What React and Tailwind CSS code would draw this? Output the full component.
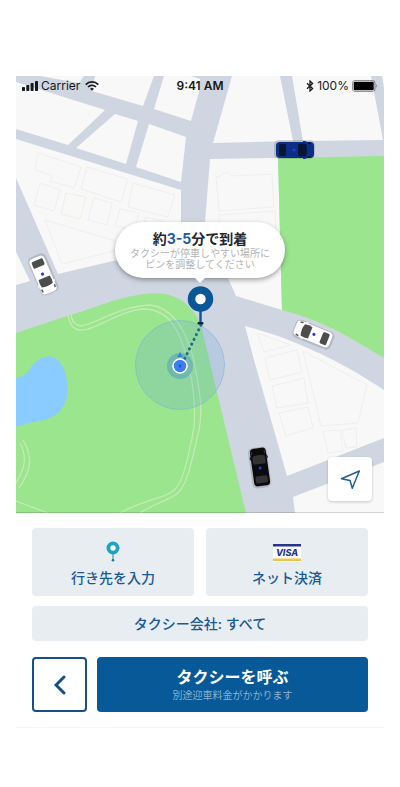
const parks = [
  'M16 333 L67 316 C95 308 115 298 138 295 C160 291 178 294 190 308 C198 316 201 324 203 334 L246 513 H16 Z',
  'M278 158 L384 156 V358 C355 341 330 323 282 310 Z',
]

const blocks = [
  '40,76 84,76 79,83',
  '95,76 154,76 143,106 92,91',
  '164,76 191,76 200,79 200,88 191,121 154,109',
  '16,82 105,110 68,145 16,129',
  '115,114 138,121 126,164 76,148',
  '149,124 186,137 181,182 136,167',
  '16,139 181,190 181,243 117,260 58,274 16,178',
  '16,252 30,281 16,285',
  '232,76 280,76 293,141 213,143',
  '292,76 371,76 383,140 303,141',
  '382,76 384,76 384,88',
  '210,159 278,158 282,310 236,296 228,278 204,235',
  '293,497 384,462 384,513 295,513',
]

const buildings = [
  '38,153 81,167 74,188 50,181 52,175 35,170',
  '87,167 128,179 121,202 81,189',
  '133,183 175,195 168,217 128,207',
  '40,183 60,190 54,211 34,205',
  '94,198 112,203 107,225 88,220',
  '120,209 139,213 134,230 115,226',
  '146,217 165,222 160,237 141,233',
  '45,220 122,243 118,250 62,264',
  '216,177 221,176 223,173 229,173 231,176 272,174 274,207 219,211',
  '219,215 275,211 277,252 222,256',
  '257,333 291,345 264,352',
  '265,358 297,350 302,372 270,380',
  '272,386 304,378 308,403 277,408',
  '279,413 308,407 313,428 286,436',
  '303,351 367,385 358,423 321,426',
  '323,431 340,430 343,451 328,453',
  '342,430 356,428 357,447 346,448',
]

const walks = [
  'M68 314 C70 330 78 332 88 329 C100 326 125 309 145 309 C172 310 180 335 187 357 C192 380 196 400 194 427 C190 450 184 480 176 488 C168 498 150 497 120 513',
  'M71 314 C72 325 80 328 88 324 C105 318 125 306 150 305 C175 308 187 335 193 357 C200 390 203 410 199 430 C192 460 188 480 180 491 C170 501 160 500 140 513',
  'M20 443 C26 455 27 465 16 483',
  'M23 440 C32 455 33 468 19 488',
  'M16 501 L48 513',
]

function Car({ x, y, angle, body, glass }) {
  return (
    <g transform={`translate(${x} ${y}) rotate(${angle})`}>
      <rect x="-20" y="-9" width="41" height="19" rx="5" fill="#000" opacity="0.14" />
      <rect x="-19" y="-8" width="38" height="16" rx="4" fill={body} />
      <path d="M-12 -8 l2 -1 h2 v1 Z M-12 8 l2 1 h2 v-1 Z" fill={body} />
      <path d="M-11 -6 Q-7 -7 -3 -6 V6 Q-7 7 -11 6 Q-13 0 -11 -6 Z" fill={glass} />
      <rect x="9" y="-6" width="7" height="12" rx="1.500" fill={glass} />
      <path d="M-16 -6.500 l3 -0.500 M-16 6.500 l3 0.500" stroke={glass} strokeWidth="1.400" />
      <circle cx="1" r="1.600" fill="#2a35e8" />
    </g>
  )
}

function CityMap() {
  return (
    <svg viewBox="16 76 368 437" className="block w-full h-auto" aria-hidden="true">
      <rect x="16" y="76" width="368" height="437" fill="#d0d6e1" />
      <g fill="#f8f8f8">
        {blocks.map((points) => <polygon key={points} points={points} />)}
        <path d="M245 326 C285 336 335 357 384 390 V438 L287 476 L254 360 Z" />
      </g>
      {parks.map((d) => <path key={d} d={d} fill="#9be58f" />)}
      <g fill="none" stroke="#efefef">
        {buildings.map((points) => <polygon key={points} points={points} />)}
      </g>
      <polygon points="66,193 86,197 80,219 61,214" fill="none" stroke="#f1eee0" />
      <path d="M16 378 C24 376 28 373 31 367 C38 358 46 355 53 357 C60 360 64 367 66 376 C69 388 68 402 60 411 C50 422 34 420 16 427 Z" fill="#8accff" />
      <g fill="none" stroke="#c3ebb4" strokeWidth="1.300">
        {walks.map((d) => <path key={d} d={d} />)}
      </g>

      {/* Current position */}
      <circle cx="180" cy="365" r="44.500" fill="#5a9bdc" fillOpacity="0.2" stroke="#7fb0dc" strokeOpacity="0.6" />
      <circle cx="180" cy="366" r="13" fill="#4fa3bd" fillOpacity="0.55" />
      <path d="M177 357 L180 352 L183 357 Z" fill="#3b82e0" />
      <path d="M201 325 L184 360" stroke="#1f6b8c" strokeWidth="3" strokeLinecap="round" strokeDasharray="0.100 5.200" />
      <circle cx="180" cy="366" r="7" fill="#3b7df2" stroke="#fff" strokeWidth="1.600" />
      <path d="M179 364 L182 366 L179 368 Z" fill="#1f57b5" />

      {/* Pickup pin */}
      <path d="M200.500 308 V323" stroke="#0a5796" strokeWidth="2.400" />
      <rect x="197.500" y="322" width="6" height="2.600" rx="1" fill="#17263a" />
      <circle cx="200.500" cy="299" r="9" fill="#fff" stroke="#0a5796" strokeWidth="7.500" />

      <Car x={43} y={275} angle={-113} body="#fff" glass="#4d4d4d" />
      <Car x={313} y={334} angle={22} body="#fff" glass="#4d4d4d" />
      <Car x={260} y={467} angle={82} body="#0b0b0d" glass="#333336" />
      <Car x={295} y={150} angle={180} body="#0b2f86" glass="#071638" />
      <path d="M16 512.500 H384" stroke="#000" strokeOpacity="0.15" />
    </svg>
  )
}

function StatusBar() {
  return (
    <div className="absolute inset-x-0 top-0 grid grid-cols-3 items-center px-1.5 pt-0.5 text-xs leading-4 text-[#16181c]">
      <div className="flex items-center gap-[3px]">
        <svg viewBox="0 0 16 10" className="w-4 h-2.5" fill="currentColor" aria-hidden="true">
          <rect y="6" width="3" height="4" rx="0.800" />
          <rect x="4.300" y="4" width="3" height="6" rx="0.800" />
          <rect x="8.600" y="2" width="3" height="8" rx="0.800" />
          <rect x="13" width="3" height="10" rx="0.800" />
        </svg>
        <span>Carrier</span>
        <svg viewBox="0 0 14 10" className="w-3.5 h-2.5 ml-0.5" fill="none" stroke="currentColor" strokeWidth="1.700" aria-hidden="true">
          <path d="M0.700 3.600 C4.300 0 9.700 0 13.300 3.600" />
          <path d="M3 6 C5.300 3.800 8.700 3.800 11 6" />
          <path d="M7 9.800 L5 7.800 Q7 6.400 9 7.800 Z" fill="currentColor" stroke="none" />
        </svg>
      </div>
      <span className="text-center font-semibold">9:41 AM</span>
      <div className="flex items-center justify-end gap-[3px]">
        <svg viewBox="0 0 8 12" className="w-2 h-3" fill="none" stroke="currentColor" strokeWidth="1.300" aria-hidden="true">
          <path d="M1 3.300 L6.600 8.600 L4 11 V1 L6.600 3.400 L1 8.700" />
        </svg>
        <span>100%</span>
        <svg viewBox="0 0 26 12" className="w-[26px] h-3" aria-hidden="true">
          <rect x="0.500" y="0.500" width="22.500" height="11" rx="2.500" fill="none" stroke="#16181c" strokeOpacity="0.45" />
          <rect x="1.700" y="1.700" width="20" height="8.600" rx="1.300" fill="#000" />
          <path d="M24.300 4 Q26 6 24.300 8 Z" fill="#16181c" fillOpacity="0.5" />
        </svg>
      </div>
    </div>
  )
}

function App() {
  return (
    <div className="min-h-screen bg-white px-4 py-[76px] font-[Inter,'Noto_Sans_CJK_JP',sans-serif]">
      <main className="border-b border-[#f3f4f6] pb-[15px]">
        <section className="relative">
          <CityMap />
          <StatusBar />

          {/* Arrival bubble */}
          <div className="absolute top-1/3 left-1/2 -translate-x-1/2 w-[170px] rounded-full bg-white pt-2 pb-2 text-center shadow-[0_2px_5px_rgba(0,0,0,0.35)]">
            <p className="text-sm leading-[18px] font-bold text-[#23272e] whitespace-nowrap">
              約<span className="text-[#1a5ba0]">3-5</span>分で到着
            </p>
            <p className="text-[10px] leading-[11px] text-[#b4b4b4] whitespace-nowrap">
              タクシーが停車しやすい場所に<br />
              ピンを調整してください
            </p>
            <span className="absolute top-full left-1/2 -translate-x-1/2 border-x-5 border-t-5 border-x-transparent border-t-white"></span>
          </div>

          <button type="button" aria-label="現在地" className="absolute right-3 bottom-3 w-11 h-11 flex items-center justify-center rounded-sm bg-white shadow-[0_1px_3px_rgba(0,0,0,0.2)]">
            <svg viewBox="0 0 20 20" className="w-5 h-5" fill="none" stroke="#1f5f92" strokeWidth="1.500" strokeLinejoin="round" aria-hidden="true">
              <path d="M19.300 2 L1.500 9.800 L10 11.500 L12.300 19.300 Z" />
            </svg>
          </button>
        </section>

        <div className="flex flex-col gap-2.5 px-4 pt-[15px] text-sm leading-5 font-medium text-[#1a5a94]">
          <div className="grid grid-cols-2 gap-3">
            <button type="button" className="flex flex-col items-center justify-center gap-1.5 rounded-sm bg-[#e8edf1] pt-1 h-17">
              <svg viewBox="0 0 14 21" className="w-3.5 h-[21px]" aria-hidden="true">
                <circle cx="7" cy="7" r="4.600" fill="#fff" stroke="#1ba3c3" strokeWidth="3.800" />
                <path d="M7 13 V19" stroke="#3a9fb5" strokeWidth="1.200" />
                <circle cx="7" cy="19.300" r="1.300" fill="#2b6f94" />
              </svg>
              行き先を入力
            </button>
            <button type="button" className="flex flex-col items-center justify-center gap-1.5 rounded-sm bg-[#e8edf1] pt-1 h-17">
              <svg viewBox="0 0 28 21" className="w-7 h-[21px]" aria-hidden="true">
                <rect y="3" width="28" height="18" fill="#fff" />
                <rect y="3" width="28" height="2.500" fill="#27348b" />
                <rect y="17.500" width="28" height="2.500" fill="#f2c14a" />
                <text x="14" y="15" textAnchor="middle" fontSize="9" fontWeight="800" fontStyle="italic" fill="#27348b">VISA</text>
              </svg>
              ネット決済
            </button>
          </div>
          <button type="button" className="rounded-sm bg-[#e8edf1] h-[35px]">タクシー会社: すべて</button>
          <div className="flex gap-2.5 pt-1.5">
            <button type="button" aria-label="戻る" className="w-[55px] h-[55px] flex items-center justify-center rounded-sm border-2 border-[#164f88] bg-white">
              <svg viewBox="0 0 12 20" className="w-3 h-5" fill="none" stroke="#0f4f8c" strokeWidth="3" strokeLinecap="round" aria-hidden="true">
                <path d="M10 2 L2 10 L10 18" />
              </svg>
            </button>
            <button type="button" className="flex-1 h-[55px] rounded-sm bg-[#075a97] text-white">
              <span className="block text-base leading-5 font-bold">タクシーを呼ぶ</span>
              <span className="block text-[10px] leading-4 font-normal text-[#8bb0d0]">別途迎車料金がかかります</span>
            </button>
          </div>
        </div>
      </main>
    </div>
  )
}

export default App
